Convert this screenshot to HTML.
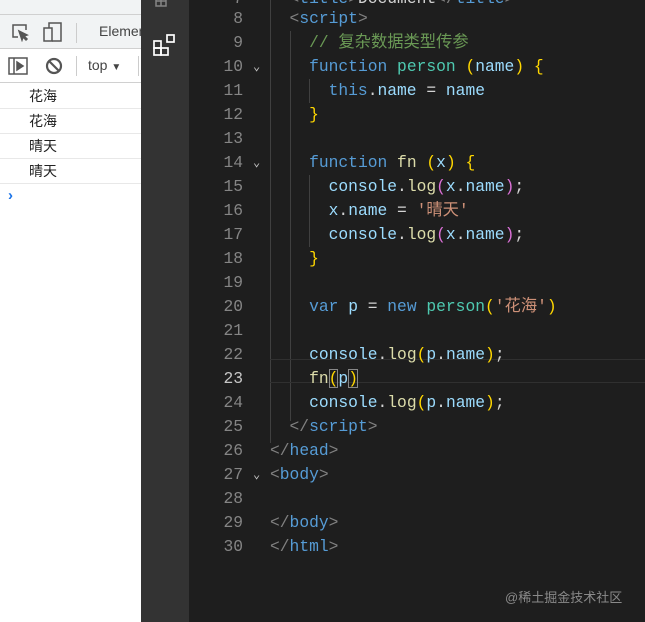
<!DOCTYPE html>
<html><head><meta charset="utf-8"><style>
*{margin:0;padding:0;box-sizing:border-box}
body{width:645px;height:622px;overflow:hidden;background:#1e1e1e;position:relative;font-family:"Liberation Sans","Noto Sans CJK SC",sans-serif}
#left{position:absolute;left:0;top:0;width:141px;height:622px;background:#fff;overflow:hidden}
.bar{position:absolute;left:0;width:141px;background:#f1f3f4;border-bottom:1px solid #d0d0d0}
.row{position:absolute;left:0;width:141px;height:25px;border-bottom:1px solid #e8e8e8;font-size:14px;color:#222;padding-left:29px;line-height:24px}
#act{position:absolute;left:141px;top:0;width:48px;height:622px;background:#333}
#ed{position:absolute;left:189px;top:0;width:456px;height:622px;background:#1e1e1e;font-family:"Liberation Mono","Noto Sans CJK SC",monospace;font-size:16.3px}
.ln{position:absolute;left:0;width:54px;text-align:right;color:#858585;height:24px;line-height:24px}
.cd{position:absolute;left:81px;white-space:pre;height:24px;line-height:24px;color:#d4d4d4}
.k{color:#569cd6}.t{color:#4ec9b0}.f{color:#dcdcaa}.v{color:#9cdcfe}.s{color:#ce9178}.c{color:#6a9955}.g{color:#808080}.y{color:#ffd700}.p{color:#da70d6}
.guide{position:absolute;width:1px;background:#404040}
.chev{position:absolute;left:64px;color:#c5c5c5;font-size:12px}
</style></head><body>
<div id="left">
 <div class="bar" style="top:0;height:15px"></div>
 <div class="bar" style="top:15px;height:34px">
  <svg style="position:absolute;left:10px;top:7px" width="20" height="20" viewBox="0 0 20 20" fill="none" stroke="#555" stroke-width="1.5"><path d="M8 15H3V3h13v5"/><path d="M9 9l8 4-3 1 3 3-1 1-3-3-1 3z" fill="#555"/></svg>
  <svg style="position:absolute;left:43px;top:6px" width="20" height="22" viewBox="0 0 20 22" fill="none" stroke="#555" stroke-width="1.5"><rect x="1" y="7" width="8" height="13"/><path d="M6 7V2h12v18H9"/></svg>
  <div style="position:absolute;left:76px;top:8px;width:1px;height:20px;background:#ccc"></div>
  <div style="position:absolute;left:99px;top:8px;font-size:14px;color:#444">Elements</div>
 </div>
 <div class="bar" style="top:49px;height:34px;background:#fff">
  <svg style="position:absolute;left:8px;top:8px" width="20" height="18" viewBox="0 0 20 18" fill="none" stroke="#555" stroke-width="1.5"><rect x="1" y="1" width="18" height="16"/><path d="M6 1v16"/><path d="M9 5l6 4-6 4z" fill="#555"/></svg>
  <svg style="position:absolute;left:45px;top:8px" width="18" height="18" viewBox="0 0 18 18" fill="none" stroke="#555" stroke-width="2.2"><circle cx="9" cy="9" r="7"/><path d="M4 4l10 10"/></svg>
  <div style="position:absolute;left:76px;top:7px;width:1px;height:20px;background:#ccc"></div>
  <div style="position:absolute;left:88px;top:8px;font-size:14px;color:#444">top <span style="font-size:10px">▼</span></div>
  <div style="position:absolute;left:138px;top:7px;width:1px;height:20px;background:#ccc"></div>
 </div>
 <div class="row" style="top:84px">花海</div>
 <div class="row" style="top:109px">花海</div>
 <div class="row" style="top:134px">晴天</div>
 <div class="row" style="top:159px">晴天</div>
 <div style="position:absolute;left:8px;top:187px;color:#1a73e8;font-size:15px;font-weight:bold">›</div>
</div>
<div id="act">
 <svg style="position:absolute;left:12px;top:-6px" width="24" height="14" viewBox="0 0 24 14" fill="none" stroke="#858585" stroke-width="1.5"><path d="M3 2h10v10H3zM8 2v10M3 7h10M15 4l5-3"/></svg>
 <svg style="position:absolute;left:11px;top:33px" width="26" height="26" viewBox="0 0 26 26" fill="none" stroke="#fff" stroke-width="1.7"><rect x="2" y="8" width="7" height="7"/><rect x="2" y="15" width="7" height="7"/><rect x="9" y="15" width="7" height="7"/><rect x="15" y="2" width="7" height="7"/></svg>
</div>
<div id="ed">
 <div class="guide" style="left:81px;top:0px;height:443px"></div>
 <div class="guide" style="left:101px;top:31px;height:390px"></div>
 <div class="guide" style="left:120px;top:79px;height:24px"></div>
 <div class="guide" style="left:120px;top:175px;height:72px"></div>
 <div style="position:absolute;left:81px;top:359px;width:375px;height:24px;border-top:1px solid #303030;border-bottom:1px solid #303030"></div>
 <div class="ln" style="top:-13px">7</div><div class="cd" style="top:-13px">  <span class="g">&lt;</span><span class="k">title</span><span class="g">&gt;</span>Document<span class="g">&lt;/</span><span class="k">title</span><span class="g">&gt;</span></div>
 <div class="ln" style="top:7px">8</div><div class="cd" style="top:7px"><span class="g">  &lt;</span><span class="k">script</span><span class="g">&gt;</span></div>
 <div class="ln" style="top:31px">9</div><div class="cd c" style="top:31px">    // 复杂数据类型传参</div>
 <div class="ln" style="top:55px">10</div><span class="chev" style="top:59px">⌄</span><div class="cd" style="top:55px">    <span class="k">function</span> <span class="t">person</span> <span class="y">(</span><span class="v">name</span><span class="y">)</span> <span class="y">{</span></div>
 <div class="ln" style="top:79px">11</div><div class="cd" style="top:79px">      <span class="k">this</span>.<span class="v">name</span> = <span class="v">name</span></div>
 <div class="ln" style="top:103px">12</div><div class="cd" style="top:103px">    <span class="y">}</span></div>
 <div class="ln" style="top:127px">13</div>
 <div class="ln" style="top:151px">14</div><span class="chev" style="top:155px">⌄</span><div class="cd" style="top:151px">    <span class="k">function</span> <span class="f">fn</span> <span class="y">(</span><span class="v">x</span><span class="y">)</span> <span class="y">{</span></div>
 <div class="ln" style="top:175px">15</div><div class="cd" style="top:175px">      <span class="v">console</span>.<span class="f">log</span><span class="p">(</span><span class="v">x</span>.<span class="v">name</span><span class="p">)</span>;</div>
 <div class="ln" style="top:199px">16</div><div class="cd" style="top:199px">      <span class="v">x</span>.<span class="v">name</span> = <span class="s">'晴天'</span></div>
 <div class="ln" style="top:223px">17</div><div class="cd" style="top:223px">      <span class="v">console</span>.<span class="f">log</span><span class="p">(</span><span class="v">x</span>.<span class="v">name</span><span class="p">)</span>;</div>
 <div class="ln" style="top:247px">18</div><div class="cd" style="top:247px">    <span class="y">}</span></div>
 <div class="ln" style="top:271px">19</div>
 <div class="ln" style="top:295px">20</div><div class="cd" style="top:295px">    <span class="k">var</span> <span class="v">p</span> = <span class="k">new</span> <span class="t">person</span><span class="y">(</span><span class="s">'花海'</span><span class="y">)</span></div>
 <div class="ln" style="top:319px">21</div>
 <div class="ln" style="top:343px">22</div><div class="cd" style="top:343px">    <span class="v">console</span>.<span class="f">log</span><span class="y">(</span><span class="v">p</span>.<span class="v">name</span><span class="y">)</span>;</div>
 <div class="ln" style="top:367px;color:#c6c6c6">23</div><div class="cd" style="top:367px">    <span class="f">fn</span><span class="y" style="outline:1px solid #888;outline-offset:-1px">(</span><span class="v">p</span><span class="y" style="outline:1px solid #888;outline-offset:-1px">)</span></div>
 <div class="ln" style="top:391px">24</div><div class="cd" style="top:391px">    <span class="v">console</span>.<span class="f">log</span><span class="y">(</span><span class="v">p</span>.<span class="v">name</span><span class="y">)</span>;</div>
 <div class="ln" style="top:415px">25</div><div class="cd" style="top:415px"><span class="g">  &lt;/</span><span class="k">script</span><span class="g">&gt;</span></div>
 <div class="ln" style="top:439px">26</div><div class="cd" style="top:439px"><span class="g">&lt;/</span><span class="k">head</span><span class="g">&gt;</span></div>
 <div class="ln" style="top:463px">27</div><span class="chev" style="top:467px">⌄</span><div class="cd" style="top:463px"><span class="g">&lt;</span><span class="k">body</span><span class="g">&gt;</span></div>
 <div class="ln" style="top:487px">28</div>
 <div class="ln" style="top:511px">29</div><div class="cd" style="top:511px"><span class="g">&lt;/</span><span class="k">body</span><span class="g">&gt;</span></div>
 <div class="ln" style="top:535px">30</div><div class="cd" style="top:535px"><span class="g">&lt;/</span><span class="k">html</span><span class="g">&gt;</span></div>
 <div style="position:absolute;left:316px;top:587px;font-family:'Liberation Sans','Noto Sans CJK SC',sans-serif;font-size:13px;color:#8a8a8a">@稀土掘金技术社区</div>
</div>
</body></html>
